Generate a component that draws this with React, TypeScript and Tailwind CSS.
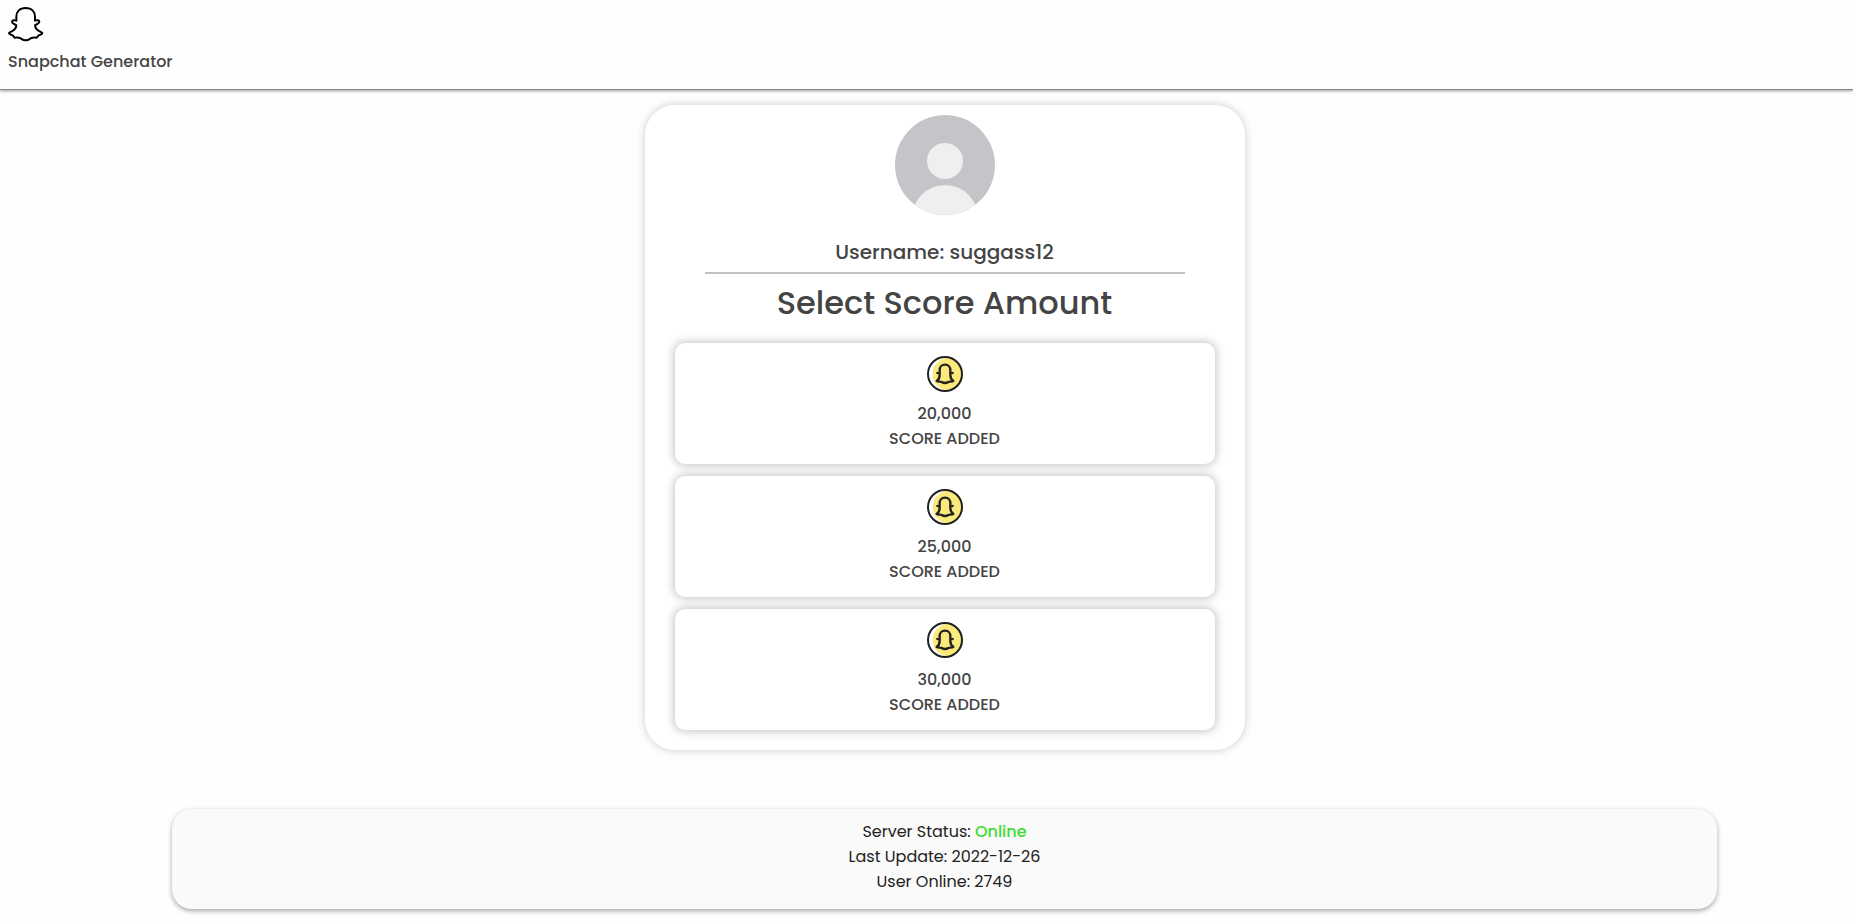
function GhostLogo() {
  return (
    <svg viewBox="0 0 108 108" className="w-9 h-9" fill="none" stroke="#000" strokeWidth="6" strokeLinejoin="round" strokeLinecap="round" aria-hidden="true">
      <path d="M53 6C35 6 25 17 25 33V44C20 42 12 42 12 47C12 53 20 54 25 58C25 68 14 76 4 80C2 83 5 85 14 88C17 90 17 94 21 95C27 95 31 94 36 96C41 99 45 103 53 103C61 103 65 99 70 96C75 94 79 95 85 95C89 94 89 90 92 88C101 85 104 83 102 80C92 76 81 68 81 58C86 54 94 53 94 47C94 42 86 42 81 44V33C81 17 71 6 53 6Z" />
    </svg>
  );
}

function CoinIcon() {
  return (
    <svg viewBox="0 0 108 108" className="w-9 h-9" fill="none" aria-hidden="true">
      <circle cx="54" cy="54" r="51" fill="#fff" />
      <path d="M60 5A49 49 0 0 1 60 103C33 98 17 79 17 54S33 10 60 5Z" fill="#fae97b" />
      <circle cx="54" cy="54" r="51" stroke="#222" strokeWidth="6" />
      <path
        d="M54 26C44 26 38 33 38 42V56C38 64 36 70 29 75C34 78 41 76 44 78C47 80 50 81 54 81S61 80 64 78C67 76 74 78 79 75C72 70 70 64 70 56V42C70 33 64 26 54 26ZM31 51L38 53M77 51L70 53"
        stroke="#222"
        strokeWidth="7"
        strokeLinejoin="round"
        strokeLinecap="round"
      />
    </svg>
  );
}

function Avatar() {
  return (
    <svg viewBox="0 0 100 100" className="w-[100px] h-[100px] rounded-full" role="img" aria-label="Avatar">
      <rect width="100" height="100" fill="#c4c5c9" />
      <circle cx="50" cy="46" r="18" fill="#efefef" />
      <circle cx="50" cy="103" r="33" fill="#efefef" />
    </svg>
  );
}

export default function App() {
  const scores = ['20,000', '25,000', '30,000'];

  return (
    <div className="bg-[#fefefe] font-['Poppins','Inter',sans-serif] text-base text-[#444] overflow-x-hidden">
      <header className="px-2 pt-1.5 pb-[15px] border-b border-[#888] shadow-[0_1px_3px_rgba(0,0,0,0.4)]">
        <GhostLogo />
        <p className="mt-2 leading-6 font-medium">Snapchat Generator</p>
      </header>

      <div className="pl-9 flex flex-col items-center">
        <main className="mt-[15px] w-full max-w-[600px] pt-2.5 pb-5 flex flex-col items-center rounded-[30px] bg-white shadow-[0_0_10px_rgba(0,0,0,0.2)]">
          <Avatar />
          <h2 className="mt-[23px] leading-7 text-xl font-medium">Username: suggass12</h2>
          <hr className="mt-1.5 w-4/5 border-t-2 border-[#c0c0c0]" />
          <h1 className="mt-[5px] leading-12 text-[32px] font-medium">Select Score Amount</h1>
          <div className="mt-4 w-9/10 flex flex-col gap-3">
            {scores.map((score) => (
              <button
                key={score}
                type="button"
                className="py-[13px] flex flex-col items-center rounded-[10px] bg-white cursor-pointer shadow-[0_0_10px_1px_rgba(0,0,0,0.25)]"
              >
                <CoinIcon />
                <span className="mt-[9px] leading-[25px] font-medium">{score}</span>
                <span className="leading-[25px] font-medium">SCORE ADDED</span>
              </button>
            ))}
          </div>
        </main>

        <footer className="mt-[59px] mb-3 w-[85%] pt-2.5 pb-[15px] rounded-[20px] bg-[#fafafa] text-center text-[#222] leading-[25px] shadow-[0_2px_5px_rgba(0,0,0,0.35)]">
          <p>
            Server Status: <span className="font-medium text-[#3ddc34]">Online</span>
          </p>
          <p>Last Update: 2022-12-26</p>
          <p>User Online: 2749</p>
        </footer>
      </div>
    </div>
  );
}
